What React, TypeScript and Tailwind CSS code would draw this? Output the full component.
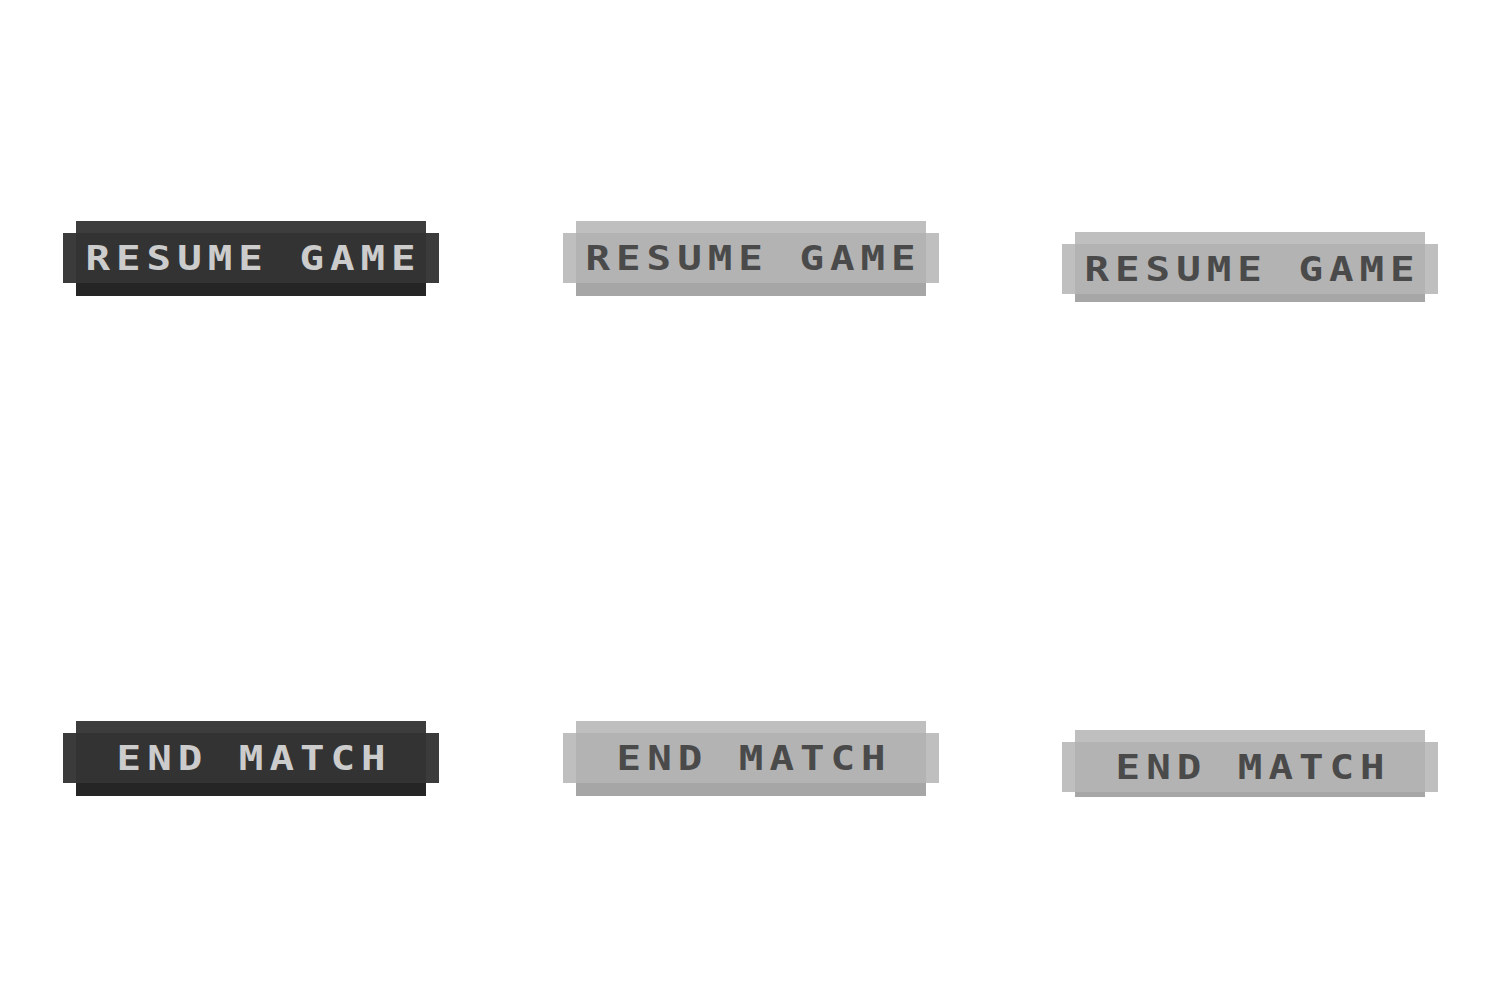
import React from "react";

type Variant = "dark" | "light" | "pressed";

function PixelButton({ label, variant, bottom }: { label: string; variant: Variant; bottom?: string }) {
  const dark = variant === "dark";
  const cap = dark ? "bg-[#3b3b3b]" : "bg-[#bfbfbf]";
  const top = dark ? "bg-[#3d3d3d]" : "bg-[#bfbfbf]";
  const mid = dark ? "bg-[#333333]" : "bg-[#b3b3b3]";
  const bot = dark ? "bg-[#252525]" : "bg-[#a6a6a6]";
  const text = dark ? "text-[#cccccc]" : "text-[#4a4a4a]";
  return (
    <div className="flex items-start">
      <div className={`mt-[12px] h-[50px] w-[13px] ${cap}`} />
      <div className="flex w-[350px] flex-col">
        <div className={`h-[12px] ${top}`} />
        <div className={`flex h-[50px] items-center justify-center ${mid}`}>
          <span
            className={`inline-block scale-x-[1.2] pl-[5px] text-[34px] font-bold leading-none tracking-[5px] ${text}`}
            style={{ fontFamily: '"DejaVu Sans Mono", "Liberation Mono", monospace' }}
          >
            {label}
          </span>
        </div>
        <div className={`${bottom ?? "h-[13px]"} ${bot}`} />
      </div>
      <div className={`mt-[12px] h-[50px] w-[13px] ${cap}`} />
    </div>
  );
}

export default function App() {
  return (
    <div className="grid h-[1000px] w-[1500px] grid-cols-3 grid-rows-2 bg-white">
      <div className="flex pl-[63px] pt-[221px]">
        <PixelButton label="RESUME GAME" variant="dark" />
      </div>
      <div className="flex pl-[63px] pt-[221px]">
        <PixelButton label="RESUME GAME" variant="light" />
      </div>
      <div className="flex pl-[62px] pt-[232px]">
        <PixelButton label="RESUME GAME" variant="pressed" bottom="h-[8px]" />
      </div>
      <div className="flex pl-[63px] pt-[221px]">
        <PixelButton label="END MATCH" variant="dark" />
      </div>
      <div className="flex pl-[63px] pt-[221px]">
        <PixelButton label="END MATCH" variant="light" />
      </div>
      <div className="flex pl-[62px] pt-[230px]">
        <PixelButton label="END MATCH" variant="pressed" bottom="h-[5px]" />
      </div>
    </div>
  );
}
